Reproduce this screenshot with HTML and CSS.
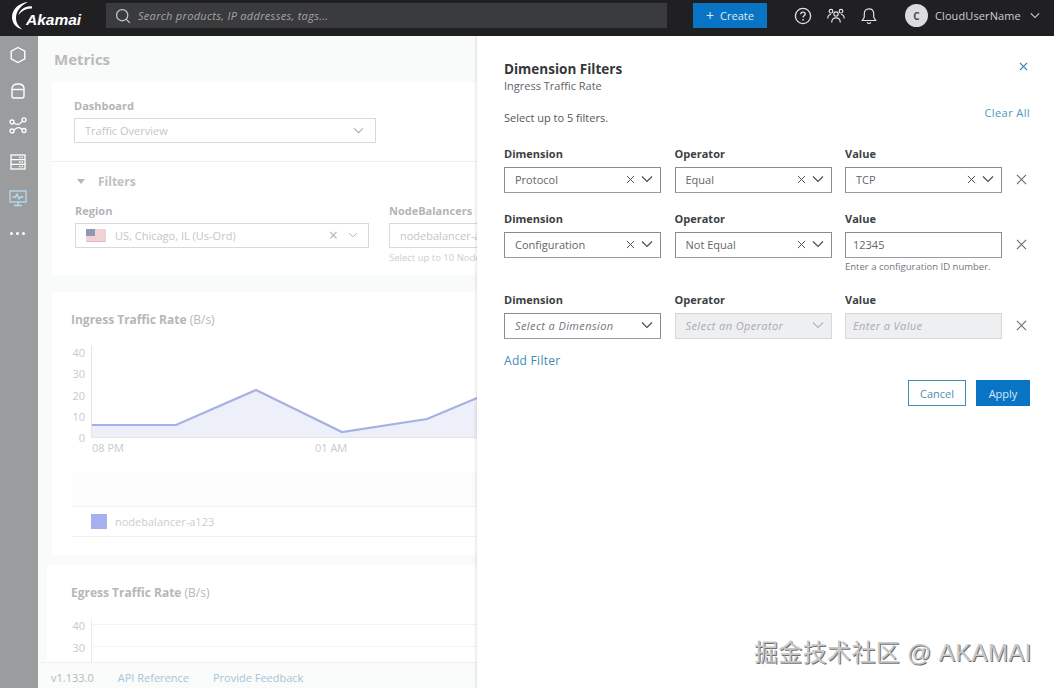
FILE: index.html
```html
<!DOCTYPE html>
<html lang="en">

<head>
    <meta charset="UTF-8">
    <meta name="viewport" content="width=device-width, initial-scale=1.0">
    <title>Metrics</title>
    <link rel="stylesheet" href="styles.css">
</head>

<body>
    <header class="topbar">
        <div class="logo">
            <svg class="logo-swoosh" viewBox="0 0 30 30" width="30" height="30">
                <path d="M17 0C7.500 1 1 7.500 1 15c0 6 4 11 10.500 12.500C7 24 5 20.500 5 16 5 9.500 9.500 3.500 17 0Z" fill="#fff"/>
                <path d="M21 4.500C14.500 3.500 9 7.500 7.500 13 11 8.500 15.500 6 21 6.500Z" fill="#fff"/>
            </svg>
            <span class="logo-text">Akamai</span>
        </div>
        <div class="search">
            <svg viewBox="0 0 16 16" width="16" height="16" fill="none" stroke="#c9cacb" stroke-width="1.200">
                <circle cx="7.200" cy="7.200" r="5.600"/>
                <path d="M11.300 11.300 14.800 14.800"/>
            </svg>
            <span>Search products, IP addresses, tags...</span>
        </div>
        <button class="create"><span class="plus">+</span> Create</button>
        <div class="top-icons">
            <svg viewBox="0 0 18 18" width="18" height="18" fill="none" stroke="#e2e2e3" stroke-width="1.300">
                <circle cx="9" cy="9" r="7.600"/>
                <path d="M6.800 7.200C6.800 5.900 7.800 5.100 9 5.100s2.200.8 2.200 2c0 1.700-2.200 1.700-2.200 3.400"/>
                <path d="M9 12.100v1.300" stroke-width="1.500"/>
            </svg>
            <svg viewBox="0 0 18 18" width="18" height="18" fill="none" stroke="#e2e2e3" stroke-width="1.200">
                <circle cx="9" cy="7" r="2.200"/>
                <path d="M4.700 15.500c0-3.200 1.800-4.700 4.300-4.700s4.300 1.500 4.300 4.700"/>
                <circle cx="4" cy="4.200" r="1.800"/>
                <circle cx="14" cy="4.200" r="1.800"/>
                <path d="M.8 11.500c0-2.500 1.200-4 3.200-4M17.200 11.500c0-2.500-1.200-4-3.200-4"/>
            </svg>
            <svg viewBox="0 0 18 18" width="18" height="18" fill="none" stroke="#e2e2e3" stroke-width="1.200">
                <path d="M9 1.800c-3 0-4.700 2.200-4.700 5v3.400L2.300 13.500h13.400l-2-3.300V6.800c0-2.800-1.700-5-4.700-5Z"/>
                <path d="M7.200 15.200c.4 1 1 1.300 1.800 1.300s1.400-.3 1.800-1.300"/>
            </svg>
        </div>
        <div class="user">
            <span class="avatar">C</span>
            <span class="user-name">CloudUserName</span>
            <svg class="chev" viewBox="0 0 12 8" width="10" height="7" fill="none" stroke="#d4d4d5" stroke-width="1.300">
                <path d="M1 1.500 6 6.500 11 1.500"/>
            </svg>
        </div>
    </header>

    <div class="shell">
        <nav class="sidebar">
            <svg viewBox="0 0 20 20" width="20" height="20" fill="none" stroke="#fff" stroke-width="1.400">
                <path d="M10 2.500 16.800 6.200V13.800L10 17.500 3.200 13.800V6.200Z"/>
            </svg>
            <svg viewBox="0 0 20 20" width="20" height="20" fill="none" stroke="#fff" stroke-width="1.400">
                <path d="M4 7.500C4 4.500 6.500 3 10 3s6 1.500 6 4.500V15c0 1.300-1 2-2 2H6c-1 0-2-.7-2-2Z"/>
                <path d="M4 8.500h12"/>
            </svg>
            <svg viewBox="0 0 20 20" width="20" height="20" fill="none" stroke="#fff" stroke-width="1.300">
                <circle cx="4" cy="6" r="2"/>
                <circle cx="4" cy="15" r="2"/>
                <circle cx="16" cy="3.800" r="2"/>
                <circle cx="16" cy="14.500" r="2"/>
                <path d="M6 6.500C8 9.500 12 9 14.400 5M6 14.500C8 11 12 10.500 14.200 13.600"/>
            </svg>
            <svg viewBox="0 0 20 20" width="20" height="20" fill="none" stroke="#fff" stroke-width="1.300">
                <rect x="3" y="3" width="14" height="14"/>
                <path d="M3 7.700h14M3 12.300h14"/>
                <path d="M11 5.400h4M11 10h4M11 14.700h4" stroke-dasharray="1.500 1"/>
            </svg>
            <svg viewBox="0 0 20 20" width="20" height="20" fill="none" stroke="#b5dcf4" stroke-width="1.300">
                <rect x="2" y="3" width="16" height="11"/>
                <path d="M4.500 9h3L9 6l2 5 1.500-2h3"/>
                <path d="M10 14v3M6 17.500h8"/>
            </svg>
            <div class="dots"><i></i><i></i><i></i></div>
        </nav>

        <main class="main">
            <h1 class="page-title">Metrics</h1>

            <section class="card card-filters">
                <div class="dash-block">
                    <label class="faded-label">Dashboard</label>
                    <div class="faded-select dash-select">
                        <span>Traffic Overview</span>
                        <svg class="chev" viewBox="0 0 12 8" width="11" height="7" fill="none" stroke="#a9abad" stroke-width="1.200">
                            <path d="M1 1.500 6 6.500 11 1.500"/>
                        </svg>
                    </div>
                </div>
                <div class="filters-head">
                    <span class="tri"></span>
                    <span>Filters</span>
                </div>
                <div class="filter-row">
                    <div class="region-col">
                        <label class="faded-label">Region</label>
                        <div class="faded-select">
                            <svg class="flag" viewBox="0 0 20 13" width="20" height="13">
                                <rect width="20" height="13" fill="#f4f4f6"/>
                                <path d="M0 1h20M0 3h20M0 5h20M0 7h20M0 9h20M0 11h20M0 12.600h20" stroke="#eeb0b0" stroke-width="1"/>
                                <rect width="9" height="7" fill="#8f98b8"/>
                            </svg>
                            <span class="region-name">US, Chicago, IL (Us-Ord)</span>
                            <span class="x-mark">&times;</span>
                            <svg class="chev" viewBox="0 0 12 8" width="10" height="6" fill="none" stroke="#a9abad" stroke-width="1.200">
                                <path d="M1 1.500 6 6.500 11 1.500"/>
                            </svg>
                        </div>
                    </div>
                    <div class="nb-col">
                        <label class="faded-label">NodeBalancers</label>
                        <div class="faded-select nb-select"><span>nodebalancer-a123</span></div>
                        <p class="faded-help">Select up to 10 NodeBalancers</p>
                    </div>
                </div>
            </section>

            <section class="card card-chart">
                <h2 class="chart-title"><b>Ingress Traffic Rate</b> (B/s)</h2>
                <div class="chart">
                    <div class="y-axis"><span>40</span><span>30</span><span>20</span><span>10</span><span>0</span></div>
                    <svg class="plot" viewBox="0 0 520 92" width="520" height="92">
                        <path d="M0 79H85L165 44 251 86 336 73 386 52 520 30V91H0Z" fill="#eef0f9"/>
                        <path d="M0 79H85L165 44 251 86 336 73 386 52 520 30" fill="none" stroke="#a5b1e4" stroke-width="2.200"/>
                        <path d="M.5 0V91.500H520" fill="none" stroke="#e3e4e5"/>
                    </svg>
                </div>
                <div class="x-axis"><span>08 PM</span><span>01 AM</span></div>
                <div class="legend-head"></div>
                <div class="legend-row">
                    <span class="swatch"></span>
                    <span>nodebalancer-a123</span>
                </div>
            </section>

            <section class="card card-egress">
                <h2 class="chart-title"><b>Egress Traffic Rate</b> (B/s)</h2>
                <div class="chart chart-short">
                    <div class="y-axis y-short"><span>40</span><span>30</span></div>
                    <div class="plot-empty"></div>
                </div>
            </section>

            <footer class="footer">
                <span class="version">v1.133.0</span>
                <a>API Reference</a>
                <a>Provide Feedback</a>
            </footer>
        </main>
    </div>

    <!-- Drawer over the dimmed page -->
    <aside class="drawer">
        <div class="drawer-head">
            <div>
                <h2>Dimension Filters</h2>
                <p class="drawer-sub">Ingress Traffic Rate</p>
            </div>
            <svg class="drawer-close" viewBox="0 0 10 10" width="9" height="9" fill="none" stroke="#2f88b3" stroke-width="1.400">
                <path d="M1 1 9 9M9 1 1 9"/>
            </svg>
        </div>
        <div class="drawer-intro">
            <p>Select up to 5 filters.</p>
            <a class="clear-all">Clear All</a>
        </div>

        <div class="dim-row">
            <div class="field">
                <label>Dimension</label>
                <div class="select"><span>Protocol</span><svg class="clear" viewBox="0 0 10 10" width="9" height="9"><path d="M1 1 9 9M9 1 1 9"/></svg><svg class="arrow" viewBox="0 0 12 8" width="12" height="8"><path d="M1 1.500 6 6.500 11 1.500"/></svg></div>
            </div>
            <div class="field">
                <label>Operator</label>
                <div class="select"><span>Equal</span><svg class="clear" viewBox="0 0 10 10" width="9" height="9"><path d="M1 1 9 9M9 1 1 9"/></svg><svg class="arrow" viewBox="0 0 12 8" width="12" height="8"><path d="M1 1.500 6 6.500 11 1.500"/></svg></div>
            </div>
            <div class="field">
                <label>Value</label>
                <div class="select"><span>TCP</span><svg class="clear" viewBox="0 0 10 10" width="9" height="9"><path d="M1 1 9 9M9 1 1 9"/></svg><svg class="arrow" viewBox="0 0 12 8" width="12" height="8"><path d="M1 1.500 6 6.500 11 1.500"/></svg></div>
            </div>
            <svg class="remove" viewBox="0 0 12 12" width="11" height="11"><path d="M1 1 11 11M11 1 1 11"/></svg>
        </div>

        <div class="dim-row">
            <div class="field">
                <label>Dimension</label>
                <div class="select"><span>Configuration</span><svg class="clear" viewBox="0 0 10 10" width="9" height="9"><path d="M1 1 9 9M9 1 1 9"/></svg><svg class="arrow" viewBox="0 0 12 8" width="12" height="8"><path d="M1 1.500 6 6.500 11 1.500"/></svg></div>
            </div>
            <div class="field">
                <label>Operator</label>
                <div class="select"><span>Not Equal</span><svg class="clear" viewBox="0 0 10 10" width="9" height="9"><path d="M1 1 9 9M9 1 1 9"/></svg><svg class="arrow" viewBox="0 0 12 8" width="12" height="8"><path d="M1 1.500 6 6.500 11 1.500"/></svg></div>
            </div>
            <div class="field">
                <label>Value</label>
                <div class="select text-input"><span>12345</span></div>
                <p class="help">Enter a configuration ID number.</p>
            </div>
            <svg class="remove" viewBox="0 0 12 12" width="11" height="11"><path d="M1 1 11 11M11 1 1 11"/></svg>
        </div>

        <div class="dim-row">
            <div class="field">
                <label>Dimension</label>
                <div class="select"><em>Select a Dimension</em><svg class="arrow" viewBox="0 0 12 8" width="12" height="8"><path d="M1 1.500 6 6.500 11 1.500"/></svg></div>
            </div>
            <div class="field">
                <label>Operator</label>
                <div class="select disabled"><em>Select an Operator</em><svg class="arrow" viewBox="0 0 12 8" width="12" height="8"><path d="M1 1.500 6 6.500 11 1.500"/></svg></div>
            </div>
            <div class="field">
                <label>Value</label>
                <div class="select text-input disabled"><em>Enter a Value</em></div>
            </div>
            <svg class="remove" viewBox="0 0 12 12" width="11" height="11"><path d="M1 1 11 11M11 1 1 11"/></svg>
        </div>

        <a class="add-filter">Add Filter</a>

        <div class="drawer-actions">
            <button class="btn-cancel">Cancel</button>
            <button class="btn-apply">Apply</button>
        </div>
    </aside>

    <div class="watermark">掘金技术社区 @ AKAMAI</div>
</body>

</html>
```

FILE: styles.css
```css
* {
    box-sizing: border-box;
}

body {
    margin: 0;
    height: 100vh;
    overflow: hidden;
    font-family: "Open Sans", Arial, sans-serif;
    font-size: 11px;
    color: #606469;
    background-color: #f9fafa;
}

/* Top bar */
.topbar {
    display: flex;
    align-items: center;
    height: 36px;
    padding-bottom: 5px;
    background-color: #202022;
    color: #e2e2e3;
}

.logo {
    position: relative;
    width: 106px;
    height: 31px;
    flex: none;
}

.logo-swoosh {
    position: absolute;
    left: 11px;
    top: 2px;
}

.logo-text {
    position: absolute;
    left: 26px;
    top: 11px;
    font-family: "Liberation Sans", Arial, sans-serif;
    font-size: 15.500px;
    font-weight: bold;
    font-style: italic;
    color: #fff;
}

.search {
    display: flex;
    align-items: center;
    gap: 7px;
    width: 561px;
    height: 25px;
    padding-left: 9px;
    background-color: #3a3b3d;
    color: #a3a4a6;
    font-style: italic;
    font-size: 11px;
    letter-spacing: 0.3px;
    flex: none;
}

.create {
    display: flex;
    align-items: center;
    justify-content: center;
    gap: 6px;
    width: 74px;
    height: 25px;
    margin-left: 26px;
    border: none;
    background-color: #0a74c4;
    color: #dfeaf3;
    font-family: inherit;
    font-size: 11px;
    font-weight: 500;
    flex: none;
}

.plus {
    font-size: 14px;
    line-height: 1;
    font-weight: 400;
}

.top-icons {
    display: flex;
    align-items: center;
    gap: 15px;
    margin-left: 27px;
    flex: none;
}

.user {
    display: flex;
    align-items: center;
    margin-left: 27px;
    flex: none;
}

.avatar {
    display: flex;
    align-items: center;
    justify-content: center;
    width: 23px;
    height: 23px;
    border-radius: 50%;
    background-color: #dcdcde;
    color: #46474a;
    font-size: 10px;
    font-weight: 700;
}

.user-name {
    margin-left: 7px;
    font-size: 11px;
    font-weight: 500;
    letter-spacing: 0.1px;
    color: #cfcfd1;
}

.user .chev {
    margin-left: 9px;
}

/* Sidebar */
.shell {
    display: flex;
    height: 652px;
}

.sidebar {
    display: flex;
    flex-direction: column;
    align-items: center;
    gap: 15.700px;
    width: 38px;
    padding: 9px 3px 0 0;
    background-color: #9b9c9d;
    flex: none;
}

.dots {
    display: flex;
    gap: 3px;
    height: 20px;
    align-items: center;
}

.dots i {
    width: 3px;
    height: 3px;
    border-radius: 50%;
    background-color: #fff;
}

/* Dimmed page */
.main {
    position: relative;
    flex: 1;
    min-width: 0;
    overflow: hidden;
    display: flex;
    flex-direction: column;
    color: #bcbec0;
}

.page-title {
    height: 46px;
    margin: 0;
    padding: 13px 0 0 16px;
    font-size: 15px;
    line-height: 20px;
    font-weight: 700;
    color: #b9bbbd;
    flex: none;
}

.card {
    background-color: #fff;
    margin-left: 14px;
    flex: none;
}

.card-filters {
    height: 193px;
    padding-top: 17px;
}

.dash-block {
    padding: 0 0 18px 22px;
    border-bottom: 1px solid #f0f0f1;
}

.faded-label {
    display: block;
    margin-bottom: 6px;
    font-size: 11px;
    line-height: 13px;
    font-weight: 700;
    color: #b3b5b7;
}

.faded-select {
    display: flex;
    align-items: center;
    height: 25px;
    padding: 0 10px 1px;
    border: 1px solid #d8d9da;
    color: #c4c6c8;
    font-size: 11px;
}

.dash-select {
    width: 302px;
    justify-content: space-between;
    padding-right: 11px;
}

.filters-head {
    display: flex;
    align-items: center;
    gap: 13px;
    height: 39px;
    padding-left: 25px;
    font-size: 12px;
    font-weight: 700;
    color: #bdbfc1;
}

.tri {
    width: 0;
    height: 0;
    border-left: 4px solid transparent;
    border-right: 4px solid transparent;
    border-top: 5px solid #b5b7b9;
}

.filter-row {
    display: flex;
    gap: 20px;
    padding: 3px 0 0 23px;
}

.region-col {
    width: 294px;
    flex: none;
}

.flag {
    flex: none;
}

.region-name {
    margin-left: 9px;
    flex: 1;
}

.x-mark {
    font-size: 16px;
    line-height: 1;
    color: #b3b5b7;
    margin-right: 10px;
}

.nb-col {
    flex: none;
    width: 300px;
}

.faded-help {
    margin: 3px 0 0;
    font-size: 9.500px;
    color: #cdced0;
}

.card-chart {
    margin-top: 17px;
    height: 263px;
    padding: 20px 0 0 19px;
}

.chart-title {
    margin: 0;
    font-size: 12px;
    line-height: 16px;
    font-weight: 400;
    color: #b5b7b9;
}

.chart-title b {
    font-weight: 700;
}

.chart {
    display: flex;
    margin-top: 18px;
}

.y-axis {
    display: flex;
    flex-direction: column;
    justify-content: space-between;
    align-items: flex-end;
    width: 20px;
    height: 98px;
    padding-right: 6px;
    color: #c8cacb;
    font-size: 11px;
    line-height: 13px;
}

.plot {
    flex: none;
}

.x-axis {
    display: flex;
    gap: 191px;
    margin: -3px 0 0 21px;
    color: #c8cacb;
    font-size: 11px;
    line-height: 14px;
}

.legend-head {
    height: 35px;
    margin-top: 17px;
    background-color: #fcfcfc;
    border-bottom: 1px solid #f0f0f1;
    margin-left: 1px;
}

.legend-row {
    display: flex;
    align-items: center;
    gap: 8px;
    height: 30px;
    margin-left: 1px;
    padding-left: 19px;
    border-bottom: 1px solid #f0f0f1;
    color: #cbcdce;
    font-size: 11px;
}

.swatch {
    width: 16px;
    height: 15px;
    background-color: #a5b1ee;
}

.card-egress {
    margin-top: 10px;
    margin-left: 9px;
    height: 140px;
    padding: 20px 0 0 24px;
}

.chart-short {
    margin-top: 18px;
}

.y-short {
    height: 34.500px;
}

.plot-empty {
    height: 60px;
    width: 520px;
    border-left: 1px solid #e9eaea;
    background-image: linear-gradient(to bottom, #f4f4f5 1px, transparent 1px);
    background-size: 100% 22px;
    background-position: 0 5px;
}

.footer {
    position: absolute;
    left: 0;
    right: 0;
    bottom: 0;
    display: flex;
    align-items: center;
    gap: 24px;
    height: 26px;
    padding: 4px 0 0 13px;
    background-color: #fafbfb;
    border-top: 1px solid #f0f0f1;
    font-size: 11px;
}

.footer a {
    color: #a6c5d8;
}

.version {
    color: #b5b7b9;
}

/* Drawer */
.drawer {
    position: absolute;
    top: 36px;
    right: 0;
    bottom: 0;
    width: 577px;
    padding: 24px 24px 0 27px;
    background-color: #fff;
    box-shadow: -1px 0 3px rgba(0, 0, 0, 0.12);
}

.drawer-head {
    display: flex;
    justify-content: space-between;
    align-items: flex-start;
}

.drawer-head h2 {
    margin: 0;
    font-size: 13.500px;
    line-height: 18px;
    font-weight: 700;
    color: #34373b;
}

.drawer-sub {
    margin: 1px 0 0;
    font-size: 11px;
    line-height: 14px;
    color: #606469;
}

.drawer-close {
    margin: 2px 2px 0 0;
}

.drawer-intro {
    display: flex;
    justify-content: space-between;
    align-items: flex-start;
    height: 54px;
}

.drawer-intro p {
    margin: 18px 0 0;
    font-size: 11px;
    line-height: 14px;
    color: #53565a;
}

.clear-all {
    margin-top: 13px;
    font-size: 11px;
    line-height: 14px;
    letter-spacing: 0.4px;
    color: #4b97ba;
}

.dim-row {
    display: grid;
    grid-template-columns: 157px 157px 157px auto;
    column-gap: 13.500px;
    align-items: start;
    height: 65px;
}

.dim-row:nth-of-type(4) {
    height: 81px;
}

.field label {
    display: block;
    height: 13px;
    margin-bottom: 7px;
    font-size: 11px;
    line-height: 13px;
    font-weight: 700;
    color: #3c3f43;
}

.select {
    display: flex;
    align-items: center;
    height: 26px;
    padding: 0 7px 2px 10px;
    border: 1px solid #8a8d90;
    border-bottom-color: #9a9c9e;
    color: #63666a;
    font-size: 11px;
}

.select span,
.select em {
    flex: 1;
}

.select em {
    letter-spacing: 0.4px;
    color: #72757a;
}

.text-input {
    padding-left: 7px;
}

.select .clear {
    fill: none;
    stroke: #4b4e52;
    stroke-width: 1.100;
    margin-right: 6px;
}

.select .arrow {
    fill: none;
    stroke: #4b4e52;
    stroke-width: 1.200;
}

.select.disabled {
    background-color: #eeeff0;
    border-color: #d6d7d9;
}

.select.disabled em {
    color: #a9abae;
}

.select.disabled .arrow {
    stroke: #b3b5b7;
}

.help {
    margin: 3px 0 0;
    font-size: 9.500px;
    line-height: 12px;
    color: #74777b;
    white-space: nowrap;
}

.remove {
    fill: none;
    stroke: #63666a;
    stroke-width: 1.100;
    margin-top: 27px;
    justify-self: start;
}

.add-filter {
    display: block;
    margin-top: -5px;
    font-size: 12px;
    line-height: 16px;
    font-weight: 500;
    letter-spacing: 0.3px;
    color: #3f8db0;
}

.drawer-actions {
    display: flex;
    justify-content: flex-end;
    gap: 10px;
    margin-top: 11px;
}

.drawer-actions button {
    height: 26px;
    font-family: inherit;
    font-size: 11px;
    font-weight: 500;
}

.btn-cancel {
    width: 58px;
    border: 1px solid #3f8db0;
    background-color: #fff;
    color: #4b90ae;
}

.btn-apply {
    width: 54px;
    border: none;
    background-color: #0a74c4;
    color: #dbe9f4;
}

/* Watermark burned into the shot */
.watermark {
    position: absolute;
    left: 754px;
    top: 637px;
    font-family: "Liberation Sans", "Noto Sans CJK SC", sans-serif;
    font-size: 24px;
    line-height: 32px;
    letter-spacing: 0.35px;
    color: #c8c8c8;
    white-space: nowrap;
    text-shadow: 1px 1px 0 #6f6f6f, -1px -1px 0 #fff;
}
```
